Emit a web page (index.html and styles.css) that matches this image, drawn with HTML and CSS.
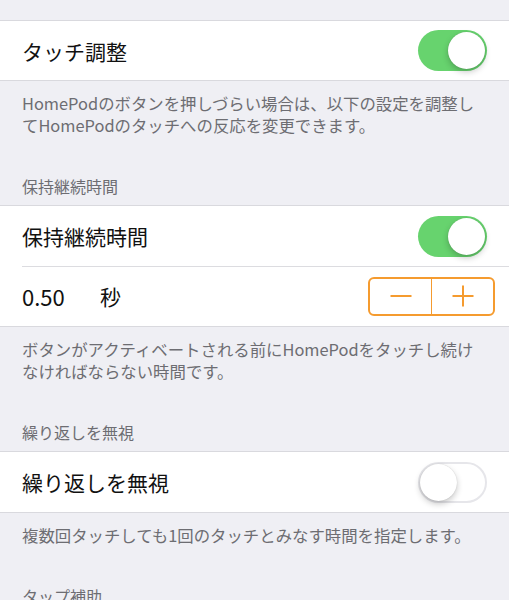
FILE: index.html
```html
<!DOCTYPE html>
<html lang="ja">
<head>
<meta charset="utf-8">
<link rel="stylesheet" href="styles.css">
</head>
<body>
<div class="page">
  <div class="spacer"></div>
  <div class="group">
    <div class="cell short">
      <span class="label">タッチ調整</span>
      <span class="switch on"><span class="knob"></span></span>
    </div>
  </div>
  <p class="footer">HomePodのボタンを押しづらい場合は、以下の設定を調整し<br>てHomePodのタッチへの反応を変更できます。</p>

  <h2 class="header">保持継続時間</h2>
  <div class="group">
    <div class="cell">
      <span class="label">保持継続時間</span>
      <span class="switch on"><span class="knob"></span></span>
    </div>
    <div class="cell inset">
      <span class="label value"><span class="num">0.50</span><span>秒</span></span>
      <span class="stepper">
        <span class="step minus"><span class="bar"></span></span>
        <span class="step plus"><span class="bar"></span><span class="bar vert"></span></span>
      </span>
    </div>
  </div>
  <p class="footer">ボタンがアクティベートされる前にHomePodをタッチし続け<br>なければならない時間です。</p>

  <h2 class="header">繰り返しを無視</h2>
  <div class="group">
    <div class="cell">
      <span class="label">繰り返しを無視</span>
      <span class="switch off"><span class="knob"></span></span>
    </div>
  </div>
  <p class="footer">複数回タッチしても1回のタッチとみなす時間を指定します。</p>

  <h2 class="header">タップ補助</h2>
</div>
</body>
</html>
```

FILE: styles.css
```css
html, body {
  margin: 0;
  padding: 0;
  background: #efeff4;
}
.page {
  width: 509px;
  height: 600px;
  overflow: hidden;
  font-family: "Noto Sans CJK JP", "Noto Sans", sans-serif;
  background: #efeff4;
}
.spacer {
  height: 20px;
}
.group {
  background: #fff;
  border-top: 1px solid #d9d9de;
  border-bottom: 1px solid #d9d9de;
}
.cell {
  height: 60px;
  display: flex;
  align-items: center;
  justify-content: space-between;
  padding: 0 22px;
  position: relative;
}
.cell.short {
  height: 59px;
}
.cell.inset::before {
  content: "";
  position: absolute;
  top: 0;
  left: 22px;
  right: 0;
  height: 1px;
  background: #dcdce0;
}
.label {
  font-size: 21px;
  color: #111;
  line-height: 30px;
}
.value {
  display: flex;
  align-items: center;
}
.num {
  width: 78px;
  font-size: 22px;
}
.switch {
  width: 69px;
  height: 41px;
  border-radius: 21px;
  box-sizing: border-box;
  position: relative;
  flex: none;
}
.switch.on {
  background: #67d36e;
}
.switch.off {
  background: #fff;
  border: 2px solid #e6e6ea;
}
.knob {
  position: absolute;
  width: 37px;
  height: 37px;
  border-radius: 50%;
  background: #fff;
  top: 2px;
  box-shadow: 0 3px 6px rgba(0,0,0,0.22), 0 0 1px rgba(0,0,0,0.2);
}
.switch.on .knob {
  right: 2px;
}
.switch.off .knob {
  left: 0;
  top: 0;
}
.stepper {
  display: flex;
  width: 127px;
  height: 39px;
  box-sizing: border-box;
  border: 2px solid #f59b2f;
  border-radius: 6px;
  margin-right: -8px;
}
.step {
  flex: 1;
  position: relative;
}
.step.minus {
  border-right: 1.5px solid #f59b2f;
}
.bar {
  position: absolute;
  width: 21px;
  height: 2px;
  background: #f59b2f;
  left: 50%;
  top: 50%;
  transform: translate(-50%, -50%);
}
.bar.vert {
  width: 2px;
  height: 21px;
}
.footer {
  margin: 0;
  padding: 11px 22px 0;
  font-size: 16.4px;
  line-height: 22px;
  color: #6d6d72;
  white-space: nowrap;
}
.header {
  margin: 0;
  padding: 39px 22px 8px;
  font-size: 16px;
  line-height: 22px;
  font-weight: normal;
  color: #6d6d72;
}
```
